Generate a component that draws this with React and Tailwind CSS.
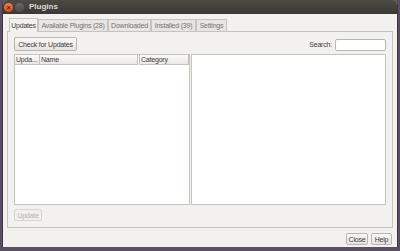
const font = { fontFamily: '"Liberation Sans", "DejaVu Sans", sans-serif' }

function Btn({ children, disabled, className = '' }) {
  return (
    <div
      className={`flex items-center justify-center whitespace-nowrap rounded-[2px] border text-[7px] leading-none tracking-[-0.2px] ${
        disabled
          ? 'border-[#d8d6d3] bg-[#f0efee] text-[#b5b3b0]'
          : 'border-[#b9b6b2] bg-gradient-to-b from-[#f8f8f7] to-[#e6e4e1] text-[#3c3c3c]'
      } ${className}`}
    >
      {children}
    </div>
  )
}

function Tab({ label, active, w }) {
  return (
    <div
      className={`flex items-center justify-center whitespace-nowrap border border-b-0 border-[#c6c3bf] text-[7px] leading-none tracking-[-0.2px] ${
        active
          ? 'relative z-10 -mb-px h-[14px] bg-[#f2f1f0] text-[#3c3c3c]'
          : 'h-[12px] bg-[#e7e6e4] text-[#76736f]'
      } ${w}`}
    >
      {label}
    </div>
  )
}

export default function App() {
  return (
    <div className="h-[251px] w-[400px] overflow-hidden bg-[#5b4d63]" style={font}>
      <div className="ml-[2px] flex h-[247px] w-[396px] flex-col overflow-hidden rounded-t-[5px] border-x border-[#3a3935] bg-[#f2f1f0]">
        <div className="flex h-[14px] shrink-0 items-center bg-gradient-to-b from-[#4b4a45] to-[#3a3935] pl-[1px]">
          <div className="flex h-[9px] w-[9px] items-center justify-center rounded-full bg-gradient-to-b from-[#f37a4e] to-[#d64d1d] text-[7px] font-bold leading-none text-[#3a2a20]">
            ×
          </div>
          <div className="ml-[2px] h-[9px] w-[9px] rounded-full bg-gradient-to-b from-[#6a6964] to-[#4c4b47]" />
          <div className="ml-[5px] text-[8px] font-bold leading-none text-[#dfdbd2]">Plugins</div>
        </div>

        <div className="flex flex-1 flex-col px-[4px] pt-[4px]">
          <div className="flex items-end pl-[2px]">
            <Tab label="Updates" active w="w-[29px]" />
            <Tab label="Available Plugins (28)" w="w-[70px]" />
            <Tab label="Downloaded" w="w-[43px]" />
            <Tab label="Installed (39)" w="w-[45px]" />
            <Tab label="Settings" w="w-[31px]" />
          </div>

          <div className="flex h-[197px] flex-col border border-[#c6c3bf] pb-[6px] pl-[6px] pr-[6px] pt-[5px]">
            <div className="flex h-[15px] items-start justify-between">
              <Btn className="h-[14px] w-[63px]">Check for Updates</Btn>
              <div className="mt-[2px] flex items-center">
                <span className="mr-[3px] text-[7px] tracking-[-0.2px] text-[#3c3c3c]">Search:</span>
                <div className="h-[12px] w-[51px] rounded-[2px] border border-[#b9b6b2] bg-white" />
              </div>
            </div>

            <div className="mt-[2px] flex h-[152px] gap-[1px]">
              <div className="flex w-[176px] flex-col border border-[#c6c3bf] bg-white">
                <div className="flex h-[10px] whitespace-nowrap text-[7px] leading-none tracking-[-0.2px] text-[#3c3c3c]">
                  <div className="flex w-[25px] items-center border-r border-b border-[#c6c3bf] bg-gradient-to-b from-[#fafaf9] to-[#e9e8e6] pl-[1px]">Upda...</div>
                  <div className="flex w-[98px] items-center border-r border-b border-[#c6c3bf] bg-gradient-to-b from-[#fafaf9] to-[#e9e8e6] pl-[1px]">Name</div>
                  <div className="ml-[1px] flex flex-1 items-center border-x border-b border-[#c6c3bf] bg-gradient-to-b from-[#fafaf9] to-[#e9e8e6] pl-[1px]">Category</div>
                </div>
              </div>
              <div className="flex-1 border border-[#c6c3bf] bg-white" />
            </div>

            <div className="mt-[4px]">
              <Btn disabled className="h-[12px] w-[28px]">Update</Btn>
            </div>
          </div>

          <div className="mt-[5px] flex justify-end gap-[3px] pr-[1px]">
            <Btn className="h-[12px] w-[22px]">Close</Btn>
            <Btn className="h-[12px] w-[21px]">Help</Btn>
          </div>
        </div>
      </div>
    </div>
  )
}
